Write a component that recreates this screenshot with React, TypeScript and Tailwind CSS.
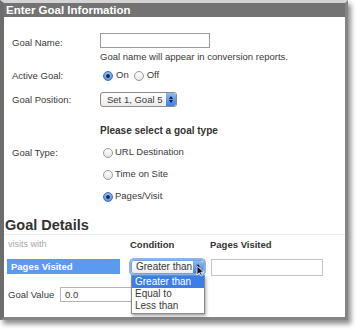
import React from "react";

function Radio({ checked }: { checked?: boolean }) {
  return checked ? (
    <span className="inline-flex w-[10px] h-[10px] rounded-full border border-[#3a6fc4] bg-[radial-gradient(circle_at_50%_35%,#a9cdf7,#3f82e0)] items-center justify-center">
      <span className="w-[4px] h-[4px] rounded-full bg-[#1c2b45]" />
    </span>
  ) : (
    <span className="inline-block w-[10px] h-[10px] rounded-full border border-[#9a9a9a] bg-[linear-gradient(#ffffff,#e4e4e4)]" />
  );
}

function Stepper() {
  return (
    <span className="absolute right-0 top-0 bottom-0 w-[10px] rounded-r-[3px] bg-[linear-gradient(#8fbaf2,#3f7fdc)] flex flex-col items-center justify-center gap-[1px]">
      <span className="w-0 h-0 border-l-[2.5px] border-r-[2.5px] border-b-[3px] border-l-transparent border-r-transparent border-b-[#0d1f3a]" />
      <span className="w-0 h-0 border-l-[2.5px] border-r-[2.5px] border-t-[3px] border-l-transparent border-r-transparent border-t-[#0d1f3a]" />
    </span>
  );
}

export default function App() {
  return (
    <div className="w-[360px] h-[330px] bg-white font-['Liberation_Sans',Arial,sans-serif] text-[9.5px] text-[#3a3a3a]">
      <div className="w-[348px] h-[320px] flex flex-col border-t-[3px] border-t-[#d4d4d4] border-l-[4px] border-l-[#6c6c6c] border-r-[3px] border-r-[#858585] border-b-[3px] border-b-[#858585] shadow-[3px_4px_5px_rgba(0,0,0,0.45)]">
        {/* Header */}
        <div className="h-[14px] bg-[#737373] text-white font-bold text-[11.5px] leading-[14px] pl-[2px]">
          Enter Goal Information
        </div>

        {/* Goal info rows */}
        <div className="flex flex-col pl-[8px]">
          <div className="flex items-start mt-[16px]">
            <div className="w-[88px] pt-[3px] leading-[13px]">Goal Name:</div>
            <div className="flex flex-col">
              <div className="w-[110px] h-[15px] border border-[#9c9c9c] bg-white" />
              <div className="mt-[2px] leading-[13px]">
                Goal name will appear in conversion reports.
              </div>
            </div>
          </div>

          <div className="flex items-center mt-[6px] h-[13px]">
            <div className="w-[91px] leading-[13px]">Active Goal:</div>
            <div className="flex items-center gap-[2px]">
              <Radio checked />
              <span className="ml-[1px]">On</span>
              <span className="ml-[3px] flex"><Radio /></span>
              <span className="ml-[1px]">Off</span>
            </div>
          </div>

          <div className="flex items-center mt-[10px]">
            <div className="w-[88px] leading-[13px]">Goal Position:</div>
            <div className="relative w-[77px] h-[15px] rounded-[3px] border border-[#8c8c8c] bg-[linear-gradient(#ffffff,#ececec)] pl-[6px] leading-[13px]">
              Set 1, Goal 5
              <Stepper />
            </div>
          </div>

          <div className="ml-[88px] mt-[17px] font-bold text-[10px] leading-[14px] text-[#333]">
            Please select a goal type
          </div>

          <div className="flex items-center mt-[8px] h-[13px]">
            <div className="w-[91px] leading-[13px]">Goal Type:</div>
            <Radio />
            <span className="ml-[2px]">URL Destination</span>
          </div>
          <div className="flex items-center mt-[9px] h-[13px] pl-[91px]">
            <Radio />
            <span className="ml-[2px]">Time on Site</span>
          </div>
          <div className="flex items-center mt-[9px] h-[13px] pl-[91px]">
            <Radio checked />
            <span className="ml-[2px]">Pages/Visit</span>
          </div>
        </div>

        {/* Goal details */}
        <div className="mt-[14px] pl-[1px] font-bold text-[14.5px] leading-[17px] text-[#333] border-b border-[#ececec]">
          Goal Details
        </div>

        <div className="flex items-center mt-[3px] h-[13px] leading-[13px]">
          <div className="w-[126px] pl-[4px] text-[9px] text-[#a8a8a8]">visits with</div>
          <div className="w-[80px] font-bold text-[#333]">Condition</div>
          <div className="font-bold text-[#333]">Pages Visited</div>
        </div>

        <div className="flex items-start mt-[8px] pl-[3px]">
          <div className="w-[113px] h-[15px] bg-[#5b9bef] text-white font-bold leading-[15px] pl-[4px]">
            Pages Visited
          </div>
          <div className="relative ml-[11px] mt-[1px] w-[73px] h-[14px] rounded-[3px] border border-[#7c9fd6] ring-2 ring-[#8db4ee] bg-[linear-gradient(#ffffff,#ececec)] pl-[4px] leading-[12px] text-[10px]">
            Greater than
            <Stepper />
            {/* dropdown list */}
            <div className="absolute left-[-1px] top-[14px] w-[74px] z-10 bg-white border border-[#8a8a8a] shadow-[1px_2px_3px_rgba(0,0,0,0.35)] flex flex-col leading-[12px] text-[10px]">
              <div className="bg-[#3d7ee6] text-white pl-[3px]">Greater than</div>
              <div className="pl-[3px]">Equal to</div>
              <div className="pl-[3px] mb-[1px]">Less than</div>
            </div>
            {/* cursor */}
            <svg className="absolute left-[64px] top-[4px] z-20" width="9" height="12" viewBox="0 0 9 12">
              <path d="M1 1 L1 10 L3.3 7.8 L5 11 L6.4 10.3 L4.8 7.2 L8 7.2 Z" fill="#111" stroke="#fff" strokeWidth="0.8" />
            </svg>
          </div>
          <div className="ml-[7px] w-[112px] h-[17px] border border-[#c4c4c4] bg-white" />
        </div>

        <div className="flex items-center mt-[11px] pl-[4px]">
          <div className="w-[52px] leading-[13px] whitespace-nowrap">Goal Value</div>
          <div className="w-[90px] h-[15px] border border-[#b5b5b5] bg-white pl-[4px] leading-[13px]">0.0</div>
        </div>
      </div>
    </div>
  );
}
